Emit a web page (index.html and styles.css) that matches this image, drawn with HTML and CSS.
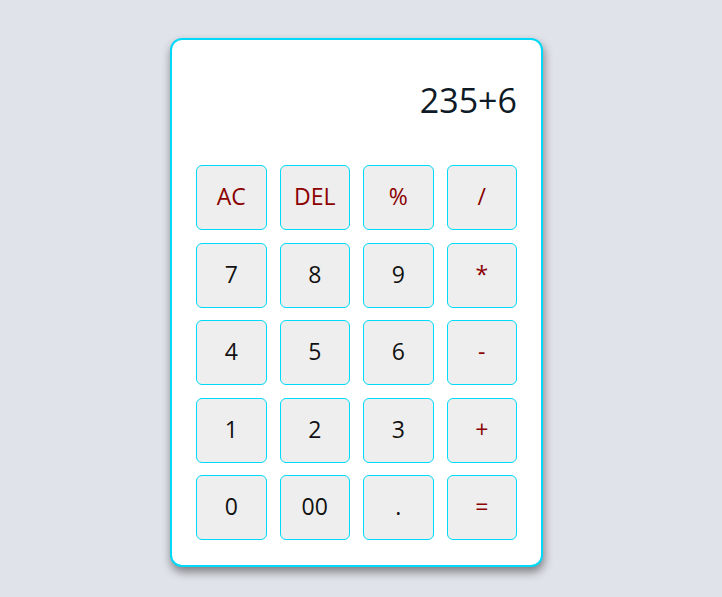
FILE: index.html
```html
<!DOCTYPE html>
<html lang="en">
<head>
<meta charset="utf-8">
<title>Calculator</title>
<link rel="stylesheet" href="styles.css">
</head>
<body>
<div class="calculator">
  <div class="display">235+6</div>
  <div class="keys">
    <button class="key op">AC</button>
    <button class="key op">DEL</button>
    <button class="key op">%</button>
    <button class="key op">/</button>
    <button class="key">7</button>
    <button class="key">8</button>
    <button class="key">9</button>
    <button class="key op">*</button>
    <button class="key">4</button>
    <button class="key">5</button>
    <button class="key">6</button>
    <button class="key op">-</button>
    <button class="key">1</button>
    <button class="key">2</button>
    <button class="key">3</button>
    <button class="key op">+</button>
    <button class="key">0</button>
    <button class="key">00</button>
    <button class="key">.</button>
    <button class="key op">=</button>
  </div>
</div>
</body>
</html>
```
FILE: styles.css
```css
* { box-sizing: border-box; }
html, body { margin: 0; padding: 0; }
body {
  background: #e0e3ea;
  font-family: "Open Sans", "DejaVu Sans", sans-serif;
  width: 722px;
  height: 597px;
  overflow: hidden;
  padding-top: 38px;
  padding-left: 170px;
}
.calculator {
  width: 373px;
  background: #fff;
  border: 2px solid #00d9f7;
  border-radius: 12px;
  padding: 24px 24px 25px;
  box-shadow: 1px 5px 10px rgba(0, 0, 0, 0.45);
}
.display {
  height: 88px;
  margin-bottom: 13px;
  padding-top: 13px;
  text-align: right;
  font-size: 34px;
  color: #0e1a26;
  line-height: normal;
}
.keys {
  display: grid;
  grid-template-columns: repeat(4, 1fr);
  grid-auto-rows: 65px;
  column-gap: 13px;
  row-gap: 12.5px;
}
.key {
  background: #eeeeee;
  border: 1px solid #00d9f7;
  border-radius: 6px;
  font-family: "Open Sans", "DejaVu Sans", sans-serif;
  font-size: 23px;
  color: #111;
  padding: 0 0 3px;
  display: flex;
  align-items: center;
  justify-content: center;
}
.key.op { color: #8b0000; }
```
